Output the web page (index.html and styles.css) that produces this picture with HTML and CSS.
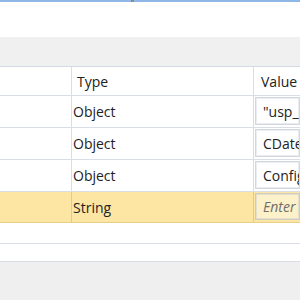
FILE: index.html
```html
<!DOCTYPE html>
<html>
<head>
<meta charset="utf-8">
<link rel="stylesheet" href="styles.css">
</head>
<body>
<div class="frame">
  <div class="topline"><span class="grip"></span></div>
  <div class="panel"></div>
  <div class="toolbar"></div>
  <div class="grid">
    <div class="row head">
      <div class="cell c1"></div>
      <div class="cell c2">Type</div>
      <div class="cell c3">Value</div>
    </div>
    <div class="row">
      <div class="cell c1"></div>
      <div class="cell c2">Object</div>
      <div class="cell c3"><div class="input">"usp_l</div></div>
    </div>
    <div class="row">
      <div class="cell c1"></div>
      <div class="cell c2">Object</div>
      <div class="cell c3"><div class="input">CDate</div></div>
    </div>
    <div class="row">
      <div class="cell c1"></div>
      <div class="cell c2">Object</div>
      <div class="cell c3"><div class="input">Config</div></div>
    </div>
    <div class="row selected">
      <div class="cell c1"></div>
      <div class="cell c2">String</div>
      <div class="cell c3"><div class="input placeholder">Enter a value</div></div>
    </div>
    <div class="row empty e1"></div>
    <div class="row empty e2"></div>
  </div>
  <div class="rest"></div>
</div>
</body>
</html>
```

FILE: styles.css
```css
html, body {
  margin: 0;
  padding: 0;
  width: 300px;
  height: 300px;
  overflow: hidden;
  background: #efefef;
  font-family: "Open Sans", "Noto Sans", sans-serif;
  font-size: 14px;
  color: #222;
}
.frame {
  width: 300px;
  height: 300px;
  display: flex;
  flex-direction: column;
  overflow: hidden;
}
.topline {
  height: 2px;
  background: #8fb8e8;
  border-bottom: 0;
  display: flex;
  flex: none;
}
.grip {
  width: 3px;
  height: 2px;
  margin-left: 131px;
  background: #8a8a8a;
}
.panel {
  height: 35px;
  background: #ffffff;
  flex: none;
}
.toolbar {
  height: 29px;
  background: #f0f0f0;
  border-bottom: 1px solid #d3d9e6;
  flex: none;
}
.grid {
  background: #fff;
  flex: none;
}
.row {
  display: flex;
  height: 31px;
  border-bottom: 1px solid #d8dde8;
  white-space: nowrap;
}
.row.head {
  height: 28px;
}
.cell {
  display: flex;
  align-items: center;
  overflow: hidden;
  box-sizing: border-box;
}
.c1 {
  width: 72px;
  border-right: 1px solid #d8dde8;
  flex: none;
}
.c2 {
  width: 182px;
  border-right: 1px solid #d8dde8;
  padding-left: 1px;
  flex: none;
}
.c3 {
  flex: 1;
  padding: 1px 0 2px 1px;
  align-items: stretch;
}
.head .c2 { padding-left: 5px; }
.head .c3 { padding: 0 0 0 7px; align-items: center; }
.input {
  flex: 1;
  box-sizing: border-box;
  border: 1px solid #d2d7e1;
  box-shadow: inset 0 0 0 1px #e9ecf1;
  background: #fff;
  padding-left: 7px;
  display: flex;
  align-items: center;
  overflow: hidden;
}
.row.selected {
  height: 30px;
  background: #fde6a4;
  border-top: 0;
  border-bottom: 1px solid #e9cf86;
}
.selected .c1, .selected .c2 {
  border-right-color: #e6cb7e;
}
.selected .input {
  background: #fdf1c9;
  border-color: #cfcbbd;
  box-shadow: inset 0 0 0 1px #e4dfcf;
}
.placeholder {
  font-style: italic;
  color: #6e6e6e;
}
.row.empty.e1 { height: 20px; }
.row.empty.e2 { height: 17px; }
.rest {
  flex: 1;
  background: #efefef;
}
```
